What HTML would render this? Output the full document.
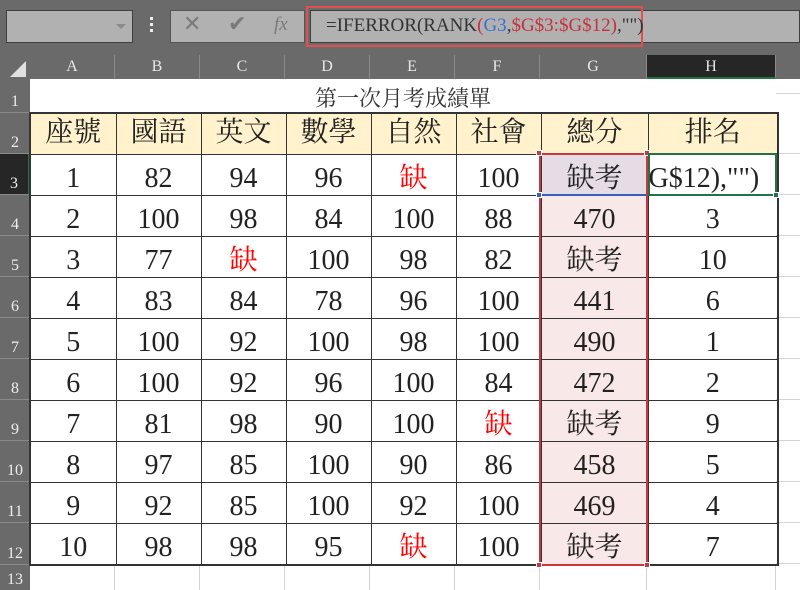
<!DOCTYPE html><html><head><meta charset="utf-8"><style>
*{margin:0;padding:0;box-sizing:border-box}
body{width:800px;height:590px;overflow:hidden;background:#fff;position:relative;font-family:"Liberation Serif","Noto Serif CJK SC",serif}
.a{position:absolute}
.top{left:0;top:0;width:800px;height:55px;background:#6a6a6a}
.box{background:#b1b1b1;border:1px solid #3f3f3f}
.ch{top:55px;height:24px;background:#6a6a6a;color:#e8e8e8;font-size:16px;text-align:center;line-height:24px;border-right:1px solid #8a8a8a}
.rh{left:0;width:30px;background:#6a6a6a;color:#eee;font-size:16px;text-align:center;border-bottom:1px solid #8a8a8a;display:flex;align-items:flex-end;justify-content:center;padding-bottom:1px}
table{position:absolute;left:29px;top:112px;width:748px;table-layout:fixed;border-collapse:collapse;border:2px solid #333}
td{border:1px solid #333;text-align:center;font-size:28px;color:#222;padding:0}
td>div{height:40px;line-height:40px;padding-top:4px;overflow:hidden;white-space:nowrap}
tr.h td{background:#fff2cc}
tr.h td>div{padding-top:0;line-height:38px}
td.g{background:#f9e8e8}
.r{color:#f00}
</style></head><body>
<div class="a top"></div>
<div class="a box" style="left:6px;top:10px;width:127px;height:33px"></div>
<div class="a" style="left:116px;top:24px;width:0;height:0;border-left:5px solid transparent;border-right:5px solid transparent;border-top:5px solid #8a8a8a"></div>
<div class="a" style="left:150px;top:17px;width:3px;height:3px;background:#eee;box-shadow:0 6px 0 #eee,0 12px 0 #eee"></div>
<div class="a box" style="left:170px;top:10px;width:135px;height:33px;border-color:#555"></div>
<div class="a" style="left:183px;top:12px;font-size:22px;color:#7a7a7a;font-family:'DejaVu Sans'">✕</div>
<div class="a" style="left:228px;top:12px;font-size:22px;color:#7a7a7a;font-family:'DejaVu Sans'">✔</div>
<div class="a" style="left:274px;top:14px;font-size:19px;color:#7a7a7a;font-style:italic">fx</div>
<div class="a box" style="left:310px;top:10px;width:490px;height:33px"></div>
<div class="a" style="left:306px;top:6px;width:337px;height:41px;border:2px solid #e05050"></div>
<div class="a" style="left:326px;top:15px;font-size:19px;color:#333;white-space:nowrap">=IFERROR(RANK<span style="color:#c8303a">(</span><span style="color:#3a6fd0">G3</span>,<span style="color:#c8303a">$G$3:$G$12)</span>,"")</div>
<div class="a" style="left:0;top:55px;width:30px;height:24px;background:#6a6a6a"></div>
<div class="a" style="left:10px;top:61px;width:0;height:0;border-left:16px solid transparent;border-bottom:16px solid #e0e0e0"></div>
<div class="a ch" style="left:30px;width:85px">A</div>
<div class="a ch" style="left:115px;width:85px">B</div>
<div class="a ch" style="left:200px;width:85px">C</div>
<div class="a ch" style="left:285px;width:85px">D</div>
<div class="a ch" style="left:370px;width:85px">E</div>
<div class="a ch" style="left:455px;width:85px">F</div>
<div class="a ch" style="left:540px;width:107px">G</div>
<div class="a ch" style="left:647px;width:129px;background:#262626;border-bottom:2px solid #217346">H</div>
<div class="a ch" style="left:776px;width:24px;border:none"></div>
<div class="a rh" style="top:79px;height:34px">1</div>
<div class="a rh" style="top:113px;height:41px">2</div>
<div class="a rh" style="top:154px;height:41px;background:#262626;border-right:2px solid #217346">3</div>
<div class="a rh" style="top:195px;height:41px">4</div>
<div class="a rh" style="top:236px;height:41px">5</div>
<div class="a rh" style="top:277px;height:41px">6</div>
<div class="a rh" style="top:318px;height:41px">7</div>
<div class="a rh" style="top:359px;height:41px">8</div>
<div class="a rh" style="top:400px;height:41px">9</div>
<div class="a rh" style="top:441px;height:41px">10</div>
<div class="a rh" style="top:482px;height:41px">11</div>
<div class="a rh" style="top:523px;height:42px">12</div>
<div class="a rh" style="top:565px;height:25px;border:none">13</div>
<div class="a" style="left:776px;top:79px;width:24px;height:511px;background:repeating-linear-gradient(#fff 0 40px,#d4d4d4 40px 41px);background-position:0 34px"></div>
<div class="a" style="left:30px;top:566px;width:770px;height:24px;background:linear-gradient(90deg,transparent 84px,#d4d4d4 84px 85px,transparent 85px 169px,#d4d4d4 169px 170px,transparent 170px 254px,#d4d4d4 254px 255px,transparent 255px 339px,#d4d4d4 339px 340px,transparent 340px 424px,#d4d4d4 424px 425px,transparent 425px 509px,#d4d4d4 509px 510px,transparent 510px 616px,#d4d4d4 616px 617px,transparent 617px 745px,#d4d4d4 745px 746px,transparent 746px)"></div>
<div class="a" style="left:30px;top:79px;width:746px;height:34px;text-align:center;font-size:22px;line-height:40px;color:#333">第一次月考成績單</div>
<table>
<colgroup><col style="width:86px"><col style="width:85px"><col style="width:85px"><col style="width:85px"><col style="width:85px"><col style="width:85px"><col style="width:107px"><col style="width:130px"></colgroup>
<tr class="h"><td><div>座號</div></td><td><div>國語</div></td><td><div>英文</div></td><td><div>數學</div></td><td><div>自然</div></td><td><div>社會</div></td><td><div>總分</div></td><td><div>排名</div></td></tr>
<tr><td><div>1</div></td><td><div>82</div></td><td><div>94</div></td><td><div>96</div></td><td class="r"><div>缺</div></td><td><div>100</div></td><td class="g" style="background:#e6dce6"><div>缺考</div></td><td><div style="text-align:right;padding-right:22px">G$12),"")</div></td></tr>
<tr><td><div>2</div></td><td><div>100</div></td><td><div>98</div></td><td><div>84</div></td><td><div>100</div></td><td><div>88</div></td><td class="g"><div>470</div></td><td><div>3</div></td></tr>
<tr><td><div>3</div></td><td><div>77</div></td><td class="r"><div>缺</div></td><td><div>100</div></td><td><div>98</div></td><td><div>82</div></td><td class="g"><div>缺考</div></td><td><div>10</div></td></tr>
<tr><td><div>4</div></td><td><div>83</div></td><td><div>84</div></td><td><div>78</div></td><td><div>96</div></td><td><div>100</div></td><td class="g"><div>441</div></td><td><div>6</div></td></tr>
<tr><td><div>5</div></td><td><div>100</div></td><td><div>92</div></td><td><div>100</div></td><td><div>98</div></td><td><div>100</div></td><td class="g"><div>490</div></td><td><div>1</div></td></tr>
<tr><td><div>6</div></td><td><div>100</div></td><td><div>92</div></td><td><div>96</div></td><td><div>100</div></td><td><div>84</div></td><td class="g"><div>472</div></td><td><div>2</div></td></tr>
<tr><td><div>7</div></td><td><div>81</div></td><td><div>98</div></td><td><div>90</div></td><td><div>100</div></td><td class="r"><div>缺</div></td><td class="g"><div>缺考</div></td><td><div>9</div></td></tr>
<tr><td><div>8</div></td><td><div>97</div></td><td><div>85</div></td><td><div>100</div></td><td><div>90</div></td><td><div>86</div></td><td class="g"><div>458</div></td><td><div>5</div></td></tr>
<tr><td><div>9</div></td><td><div>92</div></td><td><div>85</div></td><td><div>100</div></td><td><div>92</div></td><td><div>100</div></td><td class="g"><div>469</div></td><td><div>4</div></td></tr>
<tr><td><div>10</div></td><td><div>98</div></td><td><div>98</div></td><td><div>95</div></td><td class="r"><div>缺</div></td><td><div>100</div></td><td class="g"><div>缺考</div></td><td><div>7</div></td></tr>
</table>
<div class="a" style="left:539px;top:153px;width:109px;height:413px;border:2px solid #c8373f"></div>
<div class="a" style="left:541px;top:194px;width:105px;height:2px;background:#3a5fb8"></div>
<div class="a" style="left:536px;top:150px;width:6px;height:6px;background:#c8373f;border:1px solid #fff"></div>
<div class="a" style="left:644px;top:150px;width:6px;height:6px;background:#c8373f;border:1px solid #fff"></div>
<div class="a" style="left:536px;top:192px;width:6px;height:6px;background:#3a5fb8;border:1px solid #fff"></div>
<div class="a" style="left:536px;top:562px;width:6px;height:6px;background:#c8373f;border:1px solid #fff"></div>
<div class="a" style="left:644px;top:562px;width:6px;height:6px;background:#c8373f;border:1px solid #fff"></div>
<div class="a" style="left:648px;top:153px;width:129px;height:43px;border:2px solid #217346"></div>
<div class="a" style="left:773px;top:192px;width:6px;height:6px;background:#217346;border:1px solid #fff"></div>
</body></html>
